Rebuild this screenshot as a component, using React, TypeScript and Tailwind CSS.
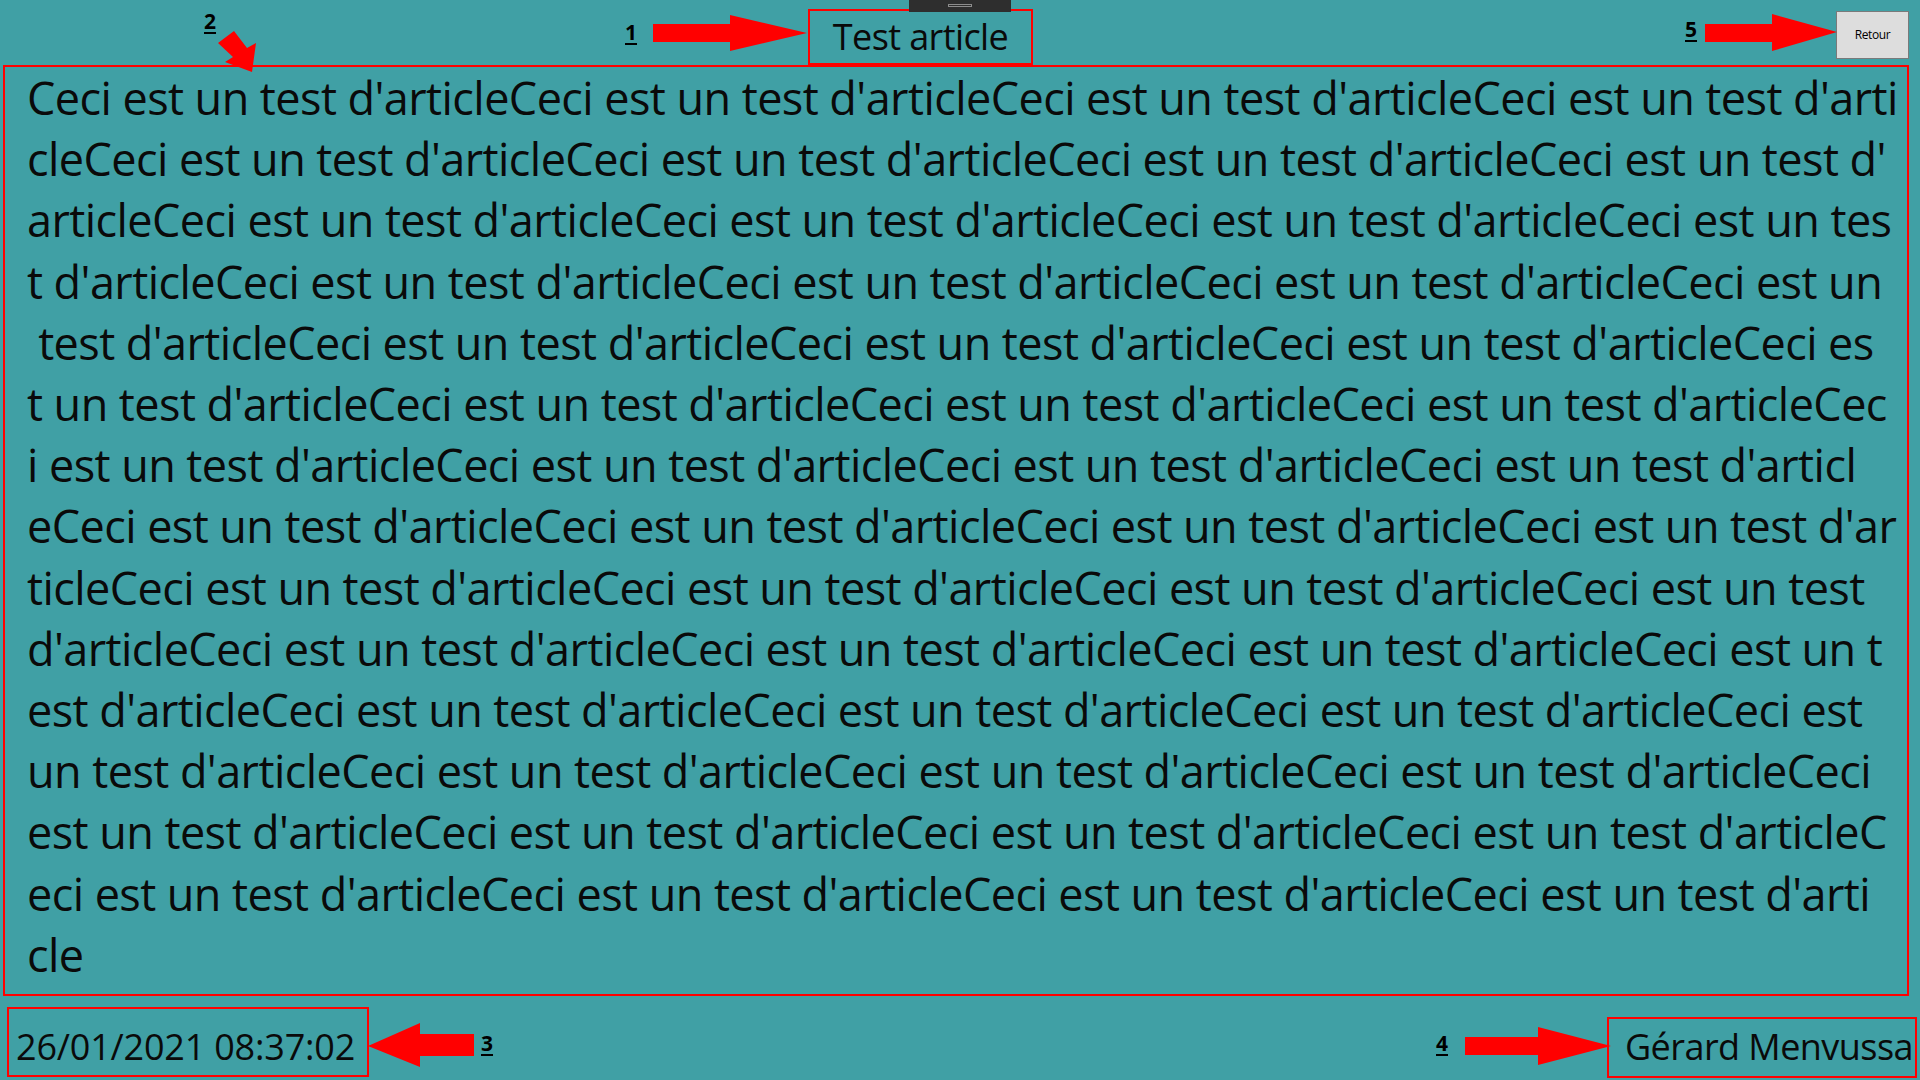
const lines = [
  "Ceci est un test d'articleCeci est un test d'articleCeci est un test d'articleCeci est un test d'arti",
  "cleCeci est un test d'articleCeci est un test d'articleCeci est un test d'articleCeci est un test d'",
  "articleCeci est un test d'articleCeci est un test d'articleCeci est un test d'articleCeci est un tes",
  "t d'articleCeci est un test d'articleCeci est un test d'articleCeci est un test d'articleCeci est un",
  " test d'articleCeci est un test d'articleCeci est un test d'articleCeci est un test d'articleCeci es",
  "t un test d'articleCeci est un test d'articleCeci est un test d'articleCeci est un test d'articleCec",
  "i est un test d'articleCeci est un test d'articleCeci est un test d'articleCeci est un test d'articl",
  "eCeci est un test d'articleCeci est un test d'articleCeci est un test d'articleCeci est un test d'ar",
  "ticleCeci est un test d'articleCeci est un test d'articleCeci est un test d'articleCeci est un test",
  "d'articleCeci est un test d'articleCeci est un test d'articleCeci est un test d'articleCeci est un t",
  "est d'articleCeci est un test d'articleCeci est un test d'articleCeci est un test d'articleCeci est",
  "un test d'articleCeci est un test d'articleCeci est un test d'articleCeci est un test d'articleCeci",
  "est un test d'articleCeci est un test d'articleCeci est un test d'articleCeci est un test d'articleC",
  "eci est un test d'articleCeci est un test d'articleCeci est un test d'articleCeci est un test d'arti",
  "cle",
];

export default function App() {
  return (
    <div className="relative flex h-[1080px] w-[1920px] flex-col overflow-hidden bg-[#40a0a5] font-['Open_Sans',sans-serif] text-[#0a0a0a]">
      {/* window drag handle */}
      <div className="absolute left-[909px] top-0 flex h-[12px] w-[102px] justify-center bg-[#2e2e2e] pt-[4px]">
        <div className="h-[3px] w-[24px] border border-[#8c8c8c]" />
      </div>

      <header className="flex h-[65px] items-start">
        <div className="ml-[808px] mt-[9px] flex h-[56px] w-[225px] justify-center border-2 border-[#ff0000] pt-[8px]">
          <span className="text-[36px] leading-none tracking-[-0.6px]">Test article</span>
        </div>
        <button className="ml-auto mr-[11px] mt-[11px] h-[48px] w-[73px] border border-[#7a7a7a] bg-[#dddddd] text-[12px] tracking-[-0.4px] text-black">
          Retour
        </button>
      </header>

      <main className="ml-[3px] h-[931px] w-[1906px] overflow-hidden border-2 border-[#ff0000] pl-[22px]">
        {lines.map((line, i) => (
          <div key={i} className="whitespace-pre text-[45px] leading-[61.2px] tracking-[-0.56px]">
            {line}
          </div>
        ))}
      </main>

      <footer className="mt-[11px] flex items-start">
        <div className="ml-[7px] h-[70px] w-[362px] border-2 border-[#ff0000] pl-[7px] pt-[20px]">
          <span className="whitespace-nowrap text-[36px] leading-none tracking-[-0.2px]">26/01/2021 08:37:02</span>
        </div>
        <div className="ml-auto mr-[3px] mt-[10px] h-[61px] w-[310px] overflow-hidden border-2 border-[#ff0000] pl-[16px] pt-[10px]">
          <span className="whitespace-nowrap text-[36px] leading-none tracking-[-0.55px]">Gérard Menvussa</span>
        </div>
      </footer>

      {/* annotation labels */}
      <span className="absolute left-[625px] top-[22px] text-[21px] font-bold leading-none text-black underline decoration-2 underline-offset-[3px]">1</span>
      <span className="absolute left-[204px] top-[11px] text-[21px] font-bold leading-none text-black underline decoration-2 underline-offset-[3px]">2</span>
      <span className="absolute left-[481px] top-[1033px] text-[21px] font-bold leading-none text-black underline decoration-2 underline-offset-[3px]">3</span>
      <span className="absolute left-[1436px] top-[1033px] text-[21px] font-bold leading-none text-black underline decoration-2 underline-offset-[3px]">4</span>
      <span className="absolute left-[1685px] top-[19px] text-[21px] font-bold leading-none text-black underline decoration-2 underline-offset-[3px]">5</span>

      {/* annotation arrows */}
      <svg className="absolute left-[653px] top-[15px]" width="154" height="36" viewBox="0 0 154 36">
        <polygon points="0,9 77,9 77,0 154,18 77,36 77,27 0,27" fill="#ff0000" />
      </svg>
      <svg className="absolute left-[210px] top-[25px]" width="50" height="50" viewBox="0 0 50 50">
        <polygon points="8,18 24,6 37,23 46,18 42,47 15,37 23,32" fill="#ff0000" />
      </svg>
      <svg className="absolute left-[368px] top-[1023px]" width="106" height="44" viewBox="0 0 106 44">
        <polygon points="0,23 52,0 52,11 106,11 106,33 52,33 52,44" fill="#ff0000" />
      </svg>
      <svg className="absolute left-[1465px] top-[1027px]" width="146" height="38" viewBox="0 0 146 38">
        <polygon points="0,10 73,10 73,0 146,19 73,38 73,28 0,28" fill="#ff0000" />
      </svg>
      <svg className="absolute left-[1705px] top-[14px]" width="132" height="37" viewBox="0 0 132 37">
        <polygon points="0,10 67,10 67,0 132,18 67,37 67,28 0,28" fill="#ff0000" />
      </svg>
    </div>
  );
}
